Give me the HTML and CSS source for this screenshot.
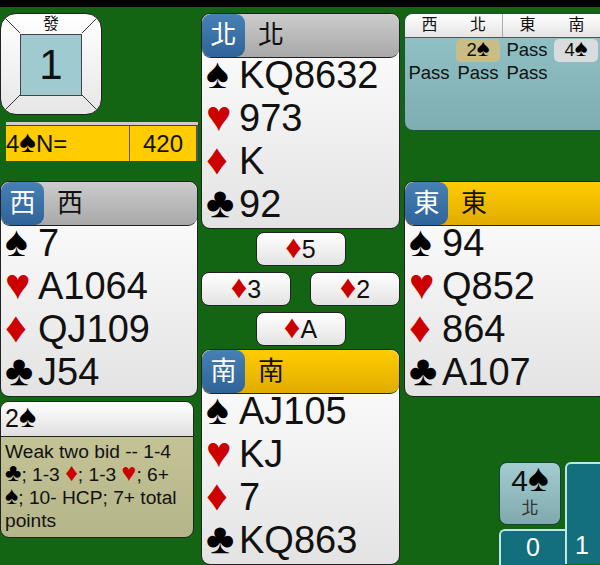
FILE: index.html
```html
<!DOCTYPE html>
<html>
<head>
    <title>Bridge Table</title>
    <link rel="stylesheet" href="styles.css">
</head>
<body>
    <div class="topbar"></div>
    <div class="table">
        <div class="column left">
            <div class="board">
                <svg class="board-frame" viewBox="0 0 102 102">
                    <path d="M4 4L20 20M98 4L82 20M4 98L20 82M98 98L82 82" stroke="#333" stroke-width="1"/>
                </svg>
                <div class="board-label">發</div>
                <div class="board-number">1</div>
            </div>
            <div class="score">
                <div class="score-contract">4<span class="suit black">♠</span>N=</div>
                <div class="score-points">420</div>
                <div class="score-end"></div>
            </div>
            <div class="hand">
                <div class="hand-title">
                    <div class="seat">西</div>
                    <div class="player">西</div>
                </div>
                <div class="hand-row"><span class="suit black">♠</span>7</div>
                <div class="hand-row"><span class="suit red">♥</span>A1064</div>
                <div class="hand-row"><span class="suit red">♦</span>QJ109</div>
                <div class="hand-row"><span class="suit black">♣</span>J54</div>
            </div>
            <div class="explain">
                <div class="explain-title">2<span class="suit black">♠</span></div>
                <div class="explain-text">Weak two bid -- 1-4 <span class="suit black">♣</span>; 1-3 <span class="suit red">♦</span>; 1-3 <span class="suit red">♥</span>; 6+ <span class="suit black">♠</span>; 10- HCP; 7+ total points</div>
            </div>
        </div>

        <div class="column middle">
            <div class="hand">
                <div class="hand-title">
                    <div class="seat">北</div>
                    <div class="player">北</div>
                </div>
                <div class="hand-row"><span class="suit black">♠</span>KQ8632</div>
                <div class="hand-row"><span class="suit red">♥</span>973</div>
                <div class="hand-row"><span class="suit red">♦</span>K</div>
                <div class="hand-row"><span class="suit black">♣</span>92</div>
            </div>
            <div class="tricks">
                <div class="trick-row"><div class="trick"><span class="suit red">♦</span>5</div></div>
                <div class="trick-row spread">
                    <div class="trick"><span class="suit red">♦</span>3</div>
                    <div class="trick"><span class="suit red">♦</span>2</div>
                </div>
                <div class="trick-row"><div class="trick"><span class="suit red">♦</span>A</div></div>
            </div>
            <div class="hand">
                <div class="hand-title active">
                    <div class="seat">南</div>
                    <div class="player">南</div>
                </div>
                <div class="hand-row"><span class="suit black">♠</span>AJ105</div>
                <div class="hand-row"><span class="suit red">♥</span>KJ</div>
                <div class="hand-row"><span class="suit red">♦</span>7</div>
                <div class="hand-row"><span class="suit black">♣</span>KQ863</div>
            </div>
        </div>

        <div class="column right">
            <div class="bidding">
                <div class="bid-head">
                    <div>西</div><div class="head-split">北</div><div>東</div><div>南</div>
                </div>
                <div class="bid-grid">
                    <div></div>
                    <div class="bid alert">2<span class="suit black">♠</span></div>
                    <div class="bid">Pass</div>
                    <div class="bid light">4<span class="suit black">♠</span></div>
                    <div class="bid">Pass</div>
                    <div class="bid">Pass</div>
                    <div class="bid">Pass</div>
                </div>
            </div>
            <div class="hand">
                <div class="hand-title active">
                    <div class="seat">東</div>
                    <div class="player">東</div>
                </div>
                <div class="hand-row"><span class="suit black">♠</span>94</div>
                <div class="hand-row"><span class="suit red">♥</span>Q852</div>
                <div class="hand-row"><span class="suit red">♦</span>864</div>
                <div class="hand-row"><span class="suit black">♣</span>A107</div>
            </div>
            <div class="tally">
                <div class="tally-left">
                    <div class="contract">
                        <div class="contract-bid">4<span class="suit black">♠</span></div>
                        <div class="contract-seat">北</div>
                    </div>
                    <div class="count count-ns">0</div>
                </div>
                <div class="count count-ew">1</div>
            </div>
        </div>
    </div>
</body>
</html>
```

FILE: styles.css
```css
html, body {
    margin: 0;
    height: 565px;
    overflow: hidden;
}

body {
    background-color: #136413;
    color: #111;
    font-family: "Liberation Sans", "Noto Sans CJK TC", sans-serif;
}

.topbar {
    height: 7px;
    background-color: #000;
}

.table {
    display: flex;
    height: 558px;
    overflow: hidden;
    padding-top: 6px;
    box-sizing: border-box;
}

.column {
    display: flex;
    flex-direction: column;
    flex: none;
}

.left {
    width: 198px;
}

.middle {
    width: 199px;
    margin-left: 3px;
}

.right {
    width: 196px;
    margin-left: 4px;
}

/* suit glyphs are drawn big, they are narrow in this font */
.suit {
    font-size: 1.3em;
    line-height: 0;
}

.black {
    color: #000;
}

.red {
    color: #c00;
}

/* board */
.board {
    position: relative;
    width: 102px;
    height: 102px;
    box-sizing: border-box;
    border: 1px solid #222;
    border-radius: 16px;
    overflow: hidden;
    background: linear-gradient(to bottom, #fff, #e6e6e6);
    display: flex;
    flex-direction: column;
    align-items: center;
}

.board-frame {
    position: absolute;
    left: -1px;
    top: -1px;
    width: 102px;
    height: 102px;
}

.board-label {
    position: relative;
    height: 20px;
    font-size: 16px;
    line-height: 19px;
}

.board-number {
    position: relative;
    width: 62px;
    height: 62px;
    box-sizing: border-box;
    border: 1px solid #444;
    background-color: #9fcbd0;
    font-size: 42px;
    line-height: 60px;
    text-align: center;
}

/* score */
.score {
    display: flex;
    margin: 7px 0 20px 6px;
    height: 39px;
    border-top: 3px solid #ccc;
    box-sizing: border-box;
    padding-top: 1px;
    flex: none;
}

.score > div {
    background-color: #fc0;
    border-right: 1px solid #555;
    font-size: 24px;
    line-height: 36px;
    height: 35px;
    box-sizing: border-box;
}

.score-contract {
    width: 124px;
    white-space: nowrap;
}

.score-points {
    width: 67px;
    text-align: center;
}

.score-end {
    flex: 1;
}

/* hands */
.hand {
    height: 216px;
    box-sizing: border-box;
    border: 1px solid #222;
    border-radius: 9px;
    background: linear-gradient(to bottom, #fff, #e3e3e3);
    overflow: hidden;
    flex: none;
}

.right .hand,
.right .bidding {
    width: 204px;
}

.hand-title {
    display: flex;
    height: 43px;
    border-bottom: 1px solid #222;
    border-radius: 9px;
    background: linear-gradient(to bottom, #ccc, #a8a8a8);
}

.hand-title.active {
    background: linear-gradient(to bottom, #fc0, #e0ac00);
}

.seat {
    width: 43px;
    border-radius: 9px;
    background: linear-gradient(to bottom, #4780b4, #2f6499);
    color: #fff;
    font-size: 26px;
    line-height: 42px;
    text-align: center;
}

.player {
    margin-left: 13px;
    font-size: 26px;
    line-height: 42px;
}

.hand-row {
    height: 43px;
    font-size: 38px;
    line-height: 35px;
    padding-left: 4px;
    white-space: nowrap;
}

.hand-row .suit {
    display: inline-block;
    width: 33px;
    font-size: 43px;
}

/* tricks */
.tricks {
    height: 120px;
    display: flex;
    flex-direction: column;
    padding-top: 3px;
    box-sizing: border-box;
    gap: 6px;
}

.trick-row {
    display: flex;
    justify-content: center;
}

.spread {
    justify-content: space-between;
}

.trick {
    width: 90px;
    height: 34px;
    box-sizing: border-box;
    border: 1px solid #222;
    border-radius: 8px;
    background: linear-gradient(to bottom, #fff, #e3e3e3);
    font-size: 25px;
    line-height: 32px;
    text-align: center;
}

/* explanation */
.explain {
    margin-top: 4px;
    width: 194px;
    height: 137px;
    box-sizing: border-box;
    border: 1px solid #222;
    border-radius: 9px;
    overflow: hidden;
    background: linear-gradient(to bottom, #c8c89a, #b5b58a);
    flex: none;
}

.explain-title {
    height: 34px;
    border-bottom: 1px solid #222;
    background: linear-gradient(to bottom, #fff, #e0e0e0);
    font-size: 25px;
    line-height: 33px;
    padding-left: 4px;
}

.explain-text {
    padding: 3px 4px;
    font-size: 19.2px;
    line-height: 23px;
}

/* bidding */
.bidding {
    height: 118px;
    margin-bottom: 50px;
    box-sizing: border-box;
    border: 1px solid #1f4f3f;
    border-radius: 9px;
    overflow: hidden;
    background: linear-gradient(to bottom, #94c5c9, #7fadb1);
    flex: none;
}

.bid-head {
    display: grid;
    grid-template-columns: 49px 49px 49px 49px;
    height: 23px;
    border-bottom: 1px solid #555;
    background: linear-gradient(to bottom, #fff, #e4e4e4);
    font-size: 16px;
    line-height: 22px;
    text-align: center;
}

.head-split {
    border-right: 1px solid #aaa;
}

.bid-grid {
    display: grid;
    grid-template-columns: repeat(4, 49px);
    grid-auto-rows: 23px;
    padding-top: 1px;
}

.bid {
    font-size: 18.5px;
    line-height: 21px;
    text-align: center;
    border-radius: 5px;
    margin: 0 3px 0 2px;
    white-space: nowrap;
}

.alert {
    background-color: #c7bd85;
}

.light {
    background-color: #d8dcdc;
}

/* tally */
.tally {
    display: flex;
    align-items: flex-start;
    margin: 65px 0 0 95px;
}

.tally-left {
    width: 66px;
    flex: none;
}

.contract {
    width: 62px;
    height: 63px;
    box-sizing: border-box;
    border: 1px solid #143;
    border-radius: 8px;
    background: linear-gradient(to bottom, #a3cdd1, #7fa9ac);
    text-align: center;
}

.contract-bid {
    font-size: 30px;
    line-height: 36px;
    white-space: nowrap;
}

.contract-seat {
    font-size: 17px;
    line-height: 20px;
    color: #333;
}

.count {
    box-sizing: border-box;
    border: 2px solid #bfe6e6;
    border-bottom: none;
    border-right: none;
    border-radius: 6px 0 0 0;
    background-color: #136f7c;
    color: #fff;
    font-size: 25px;
    line-height: 32px;
    text-align: center;
}

.count-ns {
    margin-top: 4px;
    height: 36px;
}

.count-ew {
    width: 35px;
    height: 102px;
    text-align: left;
    padding-left: 8px;
    line-height: 162px;
    flex: none;
}
```
